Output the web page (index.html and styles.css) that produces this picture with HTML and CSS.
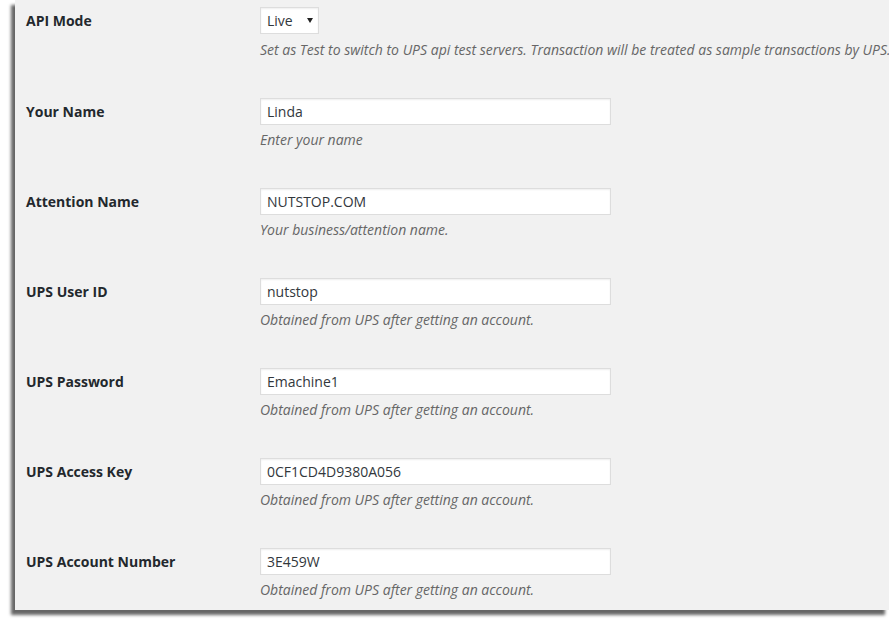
FILE: index.html
```html
<!DOCTYPE html>
<html lang="en">
<head>
  <meta charset="UTF-8" />
  <title>UPS Settings</title>
  <link rel="stylesheet" href="styles.css">
</head>
<body>
  <div class="panel">
    <div class="row">
      <div class="label">API Mode</div>
      <div class="field">
        <span class="select-wrap">
          <select>
            <option>Live</option>
            <option>Test</option>
          </select>
        </span>
        <p class="description first">Set as Test to switch to UPS api test servers. Transaction will be treated as sample transactions by UPS.</p>
      </div>
    </div>

    <div class="row">
      <div class="label">Your Name</div>
      <div class="field">
        <input type="text" value="Linda">
        <p class="description">Enter your name</p>
      </div>
    </div>

    <div class="row">
      <div class="label">Attention Name</div>
      <div class="field">
        <input type="text" value="NUTSTOP.COM">
        <p class="description">Your business/attention name.</p>
      </div>
    </div>

    <div class="row">
      <div class="label">UPS User ID</div>
      <div class="field">
        <input type="text" value="nutstop">
        <p class="description">Obtained from UPS after getting an account.</p>
      </div>
    </div>

    <div class="row">
      <div class="label">UPS Password</div>
      <div class="field">
        <input type="text" value="Emachine1">
        <p class="description">Obtained from UPS after getting an account.</p>
      </div>
    </div>

    <div class="row">
      <div class="label">UPS Access Key</div>
      <div class="field">
        <input type="text" value="0CF1CD4D9380A056">
        <p class="description">Obtained from UPS after getting an account.</p>
      </div>
    </div>

    <div class="row">
      <div class="label">UPS Account Number</div>
      <div class="field">
        <input type="text" value="3E459W">
        <p class="description">Obtained from UPS after getting an account.</p>
      </div>
    </div>
  </div>
</body>
</html>
```

FILE: styles.css
```css
body {
  font-family: 'Open Sans', 'DejaVu Sans', sans-serif;
  font-size: 14px;
  background: #fff;
  color: #23282d;
  margin: 0;
  padding: 0 0 16px;
}
.panel {
  margin-left: 15px;
  background: #f1f1f1;
  padding: 7px 0 10px 11px;
  box-shadow: -4px 5px 3px rgba(0, 0, 0, 0.6);
}
.row {
  display: grid;
  grid-template-columns: 234px 1fr;
  align-items: start;
}
.row + .row {
  margin-top: 38px;
}
.label {
  font-weight: 700;
  line-height: 27px;
  color: #23282d;
}
.field input,
.field select {
  display: block;
  box-sizing: border-box;
  height: 27px;
  margin: 0;
  border: 1px solid #ddd;
  background: #fff;
  box-shadow: inset 0 1px 2px rgba(0, 0, 0, 0.07);
  font-family: inherit;
  font-size: 14px;
  color: #32373c;
  outline: none;
}
.field input {
  width: 351px;
  padding: 0 6px;
}
.select-wrap {
  position: relative;
  display: inline-block;
  vertical-align: top;
}
.field select {
  -webkit-appearance: none;
  appearance: none;
  width: 59px;
  padding: 0 0 0 6px;
  border-radius: 0;
}
.select-wrap::after {
  content: '';
  position: absolute;
  right: 6px;
  top: 11px;
  border-left: 3px solid transparent;
  border-right: 3px solid transparent;
  border-top: 5px solid #222;
  pointer-events: none;
}
.description {
  margin: 4px 0 0;
  font-style: italic;
  line-height: 21px;
  color: #666;
  white-space: nowrap;
}
.description.first {
  margin-top: 5px;
}
```
